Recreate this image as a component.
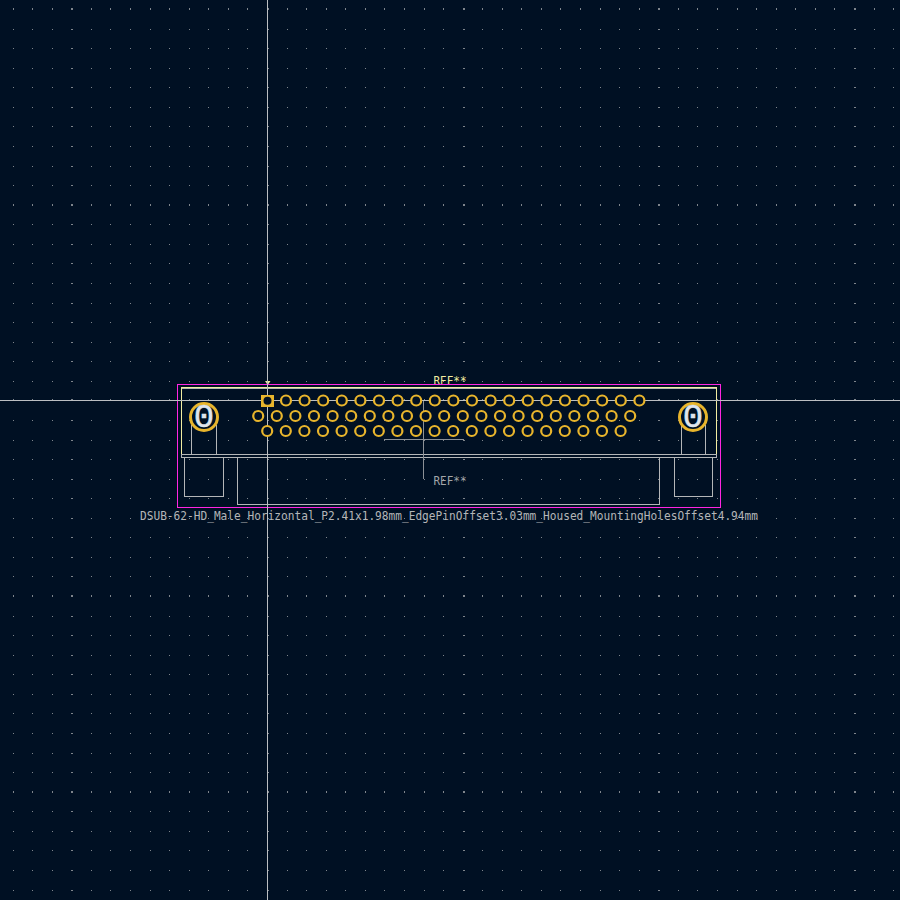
import React from "react";

const xDots: { x: number; w: number }[] = [];
for (let n = -13; n <= 32; n++) {
  xDots.push({ x: Math.floor(267.51 + n * 19.565), w: n % 10 === 0 ? 2 : 1 });
}
const yDots: { y: number; h: number }[] = [];
for (let n = -20; n <= 25; n++) {
  const f = Math.floor(400.9 + n * 19.565);
  yDots.push(n % 10 === 0 ? { y: f - 1, h: 2 } : { y: f, h: 1 });
}

const row = (start: number, count: number, y: number) =>
  Array.from({ length: count }, (_, i) => ({ x: start + i * 18.6, y }));

const pins = [
  ...row(286, 20, 400.5),
  ...row(258.2, 21, 416),
  ...row(267.2, 20, 431),
];

function Mount({ cx }: { cx: number }) {
  return (
    <g>
      <circle cx={cx} cy={417} r={13.5} className="fill-[#001023] stroke-[#e8b52c]" strokeWidth={3} />
      <text
        x={cx}
        y={426.5}
        textAnchor="middle"
        strokeWidth={0.5}
        className="fill-[#dfe5ec] stroke-[#dfe5ec] font-['Liberation_Mono'] text-[34px]"
      >
        0
      </text>
    </g>
  );
}

export default function App() {
  return (
    <div className="w-[900px] h-[900px] bg-[#001023] overflow-hidden">
      <svg width={900} height={900} viewBox="0 0 900 900" className="block">
        <g className="fill-[#7f858c]" shapeRendering="crispEdges">
          {xDots.map((d) =>
            yDots.map((e) => (
              <rect key={`${d.x}-${e.y}`} x={d.x} y={e.y} width={d.w} height={e.h} />
            ))
          )}
        </g>

        <g className="fill-none stroke-[#b4b6b8]" strokeWidth={1} shapeRendering="crispEdges">
          <rect x={181.5} y={388.5} width={535} height={69} />
          <path d="M182 454.5H717" />
          <path d="M191.5 425V454M216.5 425V454M681.5 425V454M705.5 425V454" />
          <path d="M184.5 458V496.5H223.5V458M674.5 458V496.5H712.5V458M237.5 458V504.5H659.5V458" />
          <path d="M423.5 400V479M384 439.5H464" className="stroke-[#8b9096]" />
        </g>

        <path
          d="M181.5 454V387.5H716.5V454"
          strokeWidth={1}
          shapeRendering="crispEdges"
          className="fill-none stroke-[#f2eda1]"
        />
        <path d="M265 381H270.5L267.7 385Z" className="fill-[#f2eda1]" />

        <text
          x={433.5}
          y={385}
          textLength={33}
          lengthAdjust="spacingAndGlyphs"
          className="fill-[#f2eda1] font-['DejaVu_Sans_Mono'] text-[11.5px]"
        >
          REF**
        </text>

        <rect
          x={177.5}
          y={384.5}
          width={543}
          height={123}
          strokeWidth={1}
          shapeRendering="crispEdges"
          className="fill-none stroke-[#ff26e2]"
        />

        <path
          d="M267.5 0V900M0 400.5H900"
          strokeWidth={1}
          shapeRendering="crispEdges"
          className="stroke-[#bcbfc2]"
        />

        {pins.map((p, i) => (
          <circle key={i} cx={p.x} cy={p.y} r={5} strokeWidth={2.2} className="fill-[#001023] stroke-[#e8b52c]" />
        ))}
        <rect x={261} y={395} width={13} height={12} shapeRendering="crispEdges" className="fill-[#e8b52c]" />
        <circle cx={267.5} cy={400.8} r={4} className="fill-[#001023]" />

        <Mount cx={204} />
        <Mount cx={693} />

        <text
          x={433.5}
          y={485}
          textLength={33}
          lengthAdjust="spacingAndGlyphs"
          className="fill-[#a3a6a9] font-['DejaVu_Sans_Mono'] text-[11.5px]"
        >
          REF**
        </text>
        <text
          x={140}
          y={520}
          textLength={618}
          lengthAdjust="spacingAndGlyphs"
          className="fill-[#b4b6b8] font-['DejaVu_Sans_Mono'] text-[11.5px]"
        >
          DSUB-62-HD_Male_Horizontal_P2.41x1.98mm_EdgePinOffset3.03mm_Housed_MountingHolesOffset4.94mm
        </text>
      </svg>
    </div>
  );
}
